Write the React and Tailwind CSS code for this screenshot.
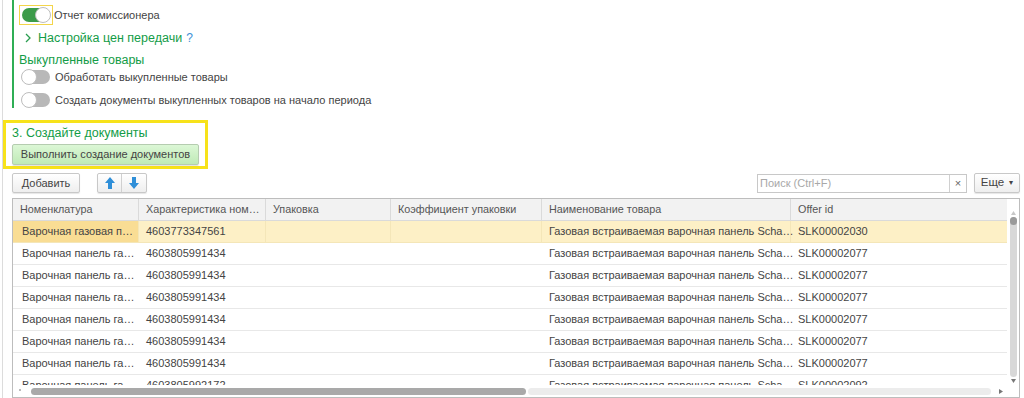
import React from "react";

const cols = [
  { t: "Номенклатура", w: 126 },
  { t: "Характеристика ном…", w: 127 },
  { t: "Упаковка", w: 125 },
  { t: "Коэффициент упаковки", w: 151 },
  { t: "Наименование товара", w: 249 },
  { t: "Offer id", w: 218 },
];

const rows = [
  ["Варочная газовая п…", "4603773347561", "", "", "Газовая встраиваемая варочная панель Scha…", "SLK00002030"],
  ["Варочная панель га…", "4603805991434", "", "", "Газовая встраиваемая варочная панель Scha…", "SLK00002077"],
  ["Варочная панель га…", "4603805991434", "", "", "Газовая встраиваемая варочная панель Scha…", "SLK00002077"],
  ["Варочная панель га…", "4603805991434", "", "", "Газовая встраиваемая варочная панель Scha…", "SLK00002077"],
  ["Варочная панель га…", "4603805991434", "", "", "Газовая встраиваемая варочная панель Scha…", "SLK00002077"],
  ["Варочная панель га…", "4603805991434", "", "", "Газовая встраиваемая варочная панель Scha…", "SLK00002077"],
  ["Варочная панель га…", "4603805991434", "", "", "Газовая встраиваемая варочная панель Scha…", "SLK00002077"],
  ["Варочная панель га…", "4603805992172", "", "", "Газовая встраиваемая варочная панель Scha…", "SLK00002092"],
];

function Toggle({ on }) {
  return on ? (
    <div className="relative w-[28px] h-[14px] rounded-full bg-[#3c9b4a]">
      <div className="absolute right-[-1px] top-[-1px] w-[16px] h-[16px] rounded-full bg-white border border-[#bdbdbd]" />
    </div>
  ) : (
    <div className="relative w-[28px] h-[14px] rounded-full bg-[#b8b8b8]">
      <div className="absolute left-[-1px] top-[-1px] w-[16px] h-[16px] rounded-full bg-white border border-[#bdbdbd]" />
    </div>
  );
}

function Arrow({ down }) {
  return (
    <svg width="10" height="12" viewBox="0 0 10 12">
      {down ? (
        <path d="M3 0h4v6h3l-5 6-5-6h3z" fill="#2f8fd8" />
      ) : (
        <path d="M3 12h4V6h3L5 0 0 6h3z" fill="#2f8fd8" />
      )}
    </svg>
  );
}

export default function App() {
  return (
    <div
      className="w-[1024px] h-[398px] bg-white overflow-hidden relative text-[#4d4d4d]"
      style={{ fontFamily: '"Liberation Sans", Arial, sans-serif' }}
    >
      {/* upper section with left lines */}
      <div className="flex h-[110px]">
        <div className="w-[1px] ml-[2px] bg-[#dcdcdc] h-[398px]" />
        <div className="w-[2px] ml-[9px] bg-[#2fae55] h-[108px]" />
        <div className="flex flex-col pl-[5px] pt-[5px]">
          <div className="flex items-center h-[20px]">
            <div className="flex items-center justify-center w-[34px] h-[20px] border border-[#f3d54a]">
              <Toggle on />
            </div>
            <span className="text-[11px] ml-[1px] text-[#444]">Отчет комиссионера</span>
          </div>
          <div className="flex items-center h-[26px] pl-[5px] mt-[1px]">
            <svg width="8" height="10" viewBox="0 0 8 10" className="mr-[6px]">
              <path d="M2 1l4 4-4 4" stroke="#2a9d50" strokeWidth="1.3" fill="none" />
            </svg>
            <span className="text-[12.5px] text-[#139c47]">Настройка цен передачи</span>
            <span className="text-[12px] text-[#3d8fd6] ml-[4px]">?</span>
          </div>
          <div className="text-[12.5px] text-[#139c47] h-[18px] leading-[18px]">Выкупленные товары</div>
          <div className="flex items-center h-[20px] pl-[3px] mt-[-1px]">
            <Toggle />
            <span className="text-[11px] ml-[5px] text-[#444]">Обработать выкупленные товары</span>
          </div>
          <div className="flex items-center h-[20px] pl-[3px] mt-[4px]">
            <Toggle />
            <span className="text-[11px] ml-[5px] text-[#444]">Создать документы выкупленных товаров на начало периода</span>
          </div>
        </div>
      </div>

      {/* yellow box */}
      <div className="ml-[3px] mt-[10px] w-[205px] h-[49px] border-[3px] border-[#f7e21a] px-[6px] pt-[2px]">
        <div className="text-[12.5px] text-[#139c47] leading-[16px]">3. Создайте документы</div>
        <div className="mt-[3px] w-[187px] h-[21px] rounded-[2px] border border-[#b5ccb0] bg-gradient-to-b from-[#dcf7d6] to-[#bfeab6] flex items-center justify-center text-[11px] text-[#444] shadow-[0_1px_1px_rgba(0,0,0,0.12)]">
          Выполнить создание документов
        </div>
      </div>

      {/* command bar */}
      <div className="flex items-center mt-[3px] h-[22px] pl-[12px] pr-[4px]">
        <div className="h-[20px] w-[68px] rounded-[2px] border border-[#c8c8c8] bg-gradient-to-b from-white to-[#eeeeee] flex items-center justify-center text-[11px] text-[#444] shadow-[0_1px_1px_rgba(0,0,0,0.1)]">
          Добавить
        </div>
        <div className="ml-[17px] h-[20px] flex rounded-[2px] border border-[#c8c8c8] bg-gradient-to-b from-white to-[#eeeeee] shadow-[0_1px_1px_rgba(0,0,0,0.1)]">
          <div className="w-[24px] flex items-center justify-center border-r border-[#d0d0d0]">
            <Arrow />
          </div>
          <div className="w-[24px] flex items-center justify-center">
            <Arrow down />
          </div>
        </div>
        <div className="flex-1" />
        <div className="h-[19px] w-[210px] flex border border-[#c8c8c8] bg-white">
          <div className="flex-1 text-[11px] text-[#a8a8a8] pl-[2px] leading-[17px]">Поиск (Ctrl+F)</div>
          <div className="w-[17px] border-l border-[#d0d0d0] flex items-center justify-center text-[11px] text-[#666] leading-none">×</div>
        </div>
        <div className="ml-[7px] h-[20px] w-[46px] rounded-[2px] border border-[#c8c8c8] bg-gradient-to-b from-white to-[#eeeeee] flex items-center justify-center text-[11.5px] text-[#444] shadow-[0_1px_1px_rgba(0,0,0,0.1)]">
          Еще <span className="ml-[5px] text-[8px]">▾</span>
        </div>
      </div>

      {/* table */}
      <div className="ml-[12px] mt-[4px] w-[1008px] h-[200px] border border-[#bdbdbd] flex">
        <div className="flex-1 flex flex-col min-w-0">
          <div className="flex h-[22px] bg-[#f2f2f2] border-b border-[#dadada] shrink-0">
            {cols.map((c, i) => (
              <div
                key={i}
                style={{ width: c.w }}
                className="shrink-0 border-r border-[#dadada] pl-[7px] text-[10.8px] leading-[21px] text-[#555] whitespace-nowrap overflow-hidden"
              >
                {c.t}
              </div>
            ))}
          </div>
          <div className="flex-1 overflow-hidden">
            {rows.map((r, ri) => (
              <div
                key={ri}
                className={`flex h-[22px] border-b ${ri === 0 ? "bg-[#fdf0c6] border-[#f4e6b8]" : "bg-white border-[#e8e8e8]"}`}
              >
                {r.map((cell, ci) => (
                  <div
                    key={ci}
                    style={{ width: cols[ci].w }}
                    className={`shrink-0 text-[11px] leading-[21px] text-[#444] whitespace-nowrap ${ci === 0 ? "pl-[9px]" : "pl-[7px]"} ${ri === 0 && ci === 0 ? "bg-[#f9dd94]" : ""} ${ri === 0 ? "border-r border-[#f4e6b8]" : ""}`}
                  >
                    {cell}
                  </div>
                ))}
              </div>
            ))}
          </div>
          <div className="h-[12px] shrink-0 bg-white flex items-center relative">
            <div className="absolute left-[6px] top-[4px] w-[2px] h-[2px] bg-[#bbb]" />
            <div className="ml-[18px] w-[495px] h-[7px] rounded-full bg-[#a9a9a9]" />
            <div className="ml-[2px] flex-1 h-[7px] rounded-full bg-[#ececec] mr-[16px]" />
            <svg width="4" height="5" viewBox="0 0 4 5" className="absolute right-[4px] top-[4px]">
              <path d="M0 0l4 2.5L0 5z" fill="#777" />
            </svg>
          </div>
        </div>
        <div className="w-[12px] flex flex-col items-center pt-[3px] bg-white">
          <svg width="5" height="4" viewBox="0 0 5 4" className="mb-[2px] mt-[9px]">
            <path d="M0 4l2.5-4L5 4z" fill="#c8c8c8" />
          </svg>
          <div className="w-[7px] h-[160px] rounded-full bg-[#d8d8d8] relative">
            <div className="absolute top-0 left-0 w-[7px] h-[8px] rounded-full bg-[#9a9a9a]" />
          </div>
          <svg width="5" height="4" viewBox="0 0 5 4" className="mt-[2px]">
            <path d="M0 0l2.5 4L5 0z" fill="#777" />
          </svg>
        </div>
      </div>
    </div>
  );
}
